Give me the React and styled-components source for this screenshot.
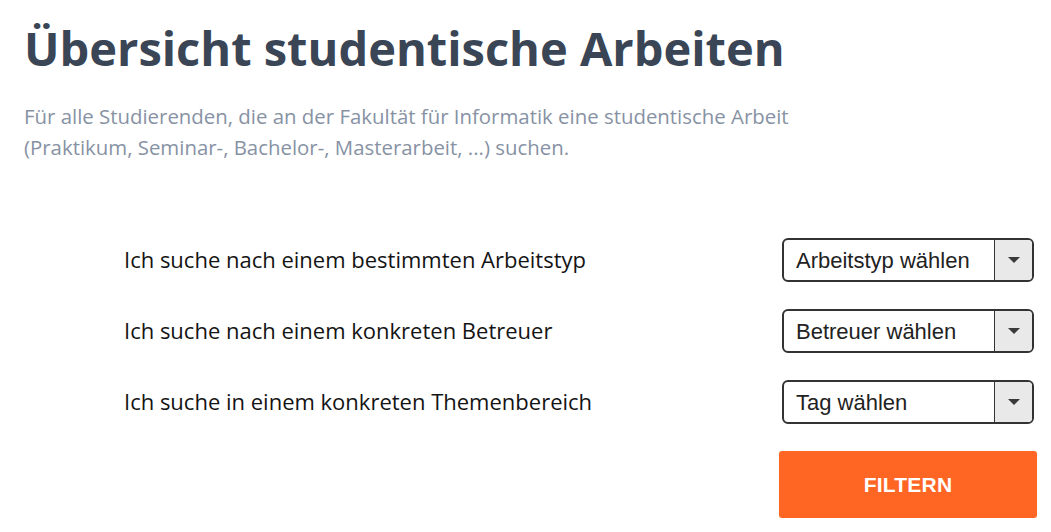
import { Fragment } from "react";
import styled, { createGlobalStyle } from "styled-components";

const GlobalStyle = createGlobalStyle`
  body {
    margin: 0;
    background: #fff;
    font-family: "Open Sans", "Liberation Sans", sans-serif;
  }
`;

const Page = styled.div`
  padding: 0 14px 0 24px;
`;

const Title = styled.h1`
  margin: 21px 0 0;
  font-size: 47px;
  line-height: 55px;
  font-weight: 700;
  color: #3a4555;
`;

const Intro = styled.p`
  margin: 25px 0 0;
  max-width: 800px;
  font-size: 20.4px;
  line-height: 31px;
  color: #8792a4;
`;

const Form = styled.div`
  margin: 75px 0 0 100px;
  display: grid;
  grid-template-columns: 1fr 258px;
  row-gap: 27px;
  align-items: center;
`;

const Label = styled.label`
  font-size: 22px;
  line-height: 30px;
  color: #141414;
  padding-bottom: 2px;
`;

const SelectBox = styled.div`
  justify-self: center;
  width: 252px;
  height: 44px;
  box-sizing: border-box;
  display: flex;
  border: 2px solid #333;
  border-radius: 6px;
  overflow: hidden;
  background: #fff;
`;

const Select = styled.select`
  flex: 1;
  min-width: 0;
  appearance: none;
  border: none;
  outline: none;
  background: transparent;
  padding: 0 0 0 12px;
  font-family: "Liberation Sans", Arial, sans-serif;
  font-size: 22px;
  color: #222;
`;

const ArrowBox = styled.div`
  width: 37px;
  display: flex;
  align-items: center;
  justify-content: center;
  background: #e9e9e9;
  border-left: 1.5px solid #333;
`;

const Arrow = styled.span`
  width: 0;
  height: 0;
  border-left: 6px solid transparent;
  border-right: 6px solid transparent;
  border-top: 6px solid #3a3a3a;
`;

const Spacer = styled.div``;

const FilterButton = styled.button`
  height: 67px;
  border: none;
  border-radius: 3px;
  background: #ff6624;
  color: #fff;
  font-family: "Liberation Sans", Arial, sans-serif;
  font-weight: 700;
  font-size: 21px;
  letter-spacing: 0.2px;
  cursor: pointer;
`;

const rows = [
  { label: "Ich suche nach einem bestimmten Arbeitstyp", placeholder: "Arbeitstyp wählen" },
  { label: "Ich suche nach einem konkreten Betreuer", placeholder: "Betreuer wählen" },
  { label: "Ich suche in einem konkreten Themenbereich", placeholder: "Tag wählen" },
];

const App = () => {
  return (
    <Page>
      <GlobalStyle />
      <Title>Übersicht studentische Arbeiten</Title>
      <Intro>
        Für alle Studierenden, die an der Fakultät für Informatik eine studentische
        Arbeit <br />(Praktikum, Seminar-, Bachelor-, Masterarbeit, ...) suchen.
      </Intro>
      <Form>
        {rows.map((row) => (
          <Fragment key={row.label}>
            <Label>{row.label}</Label>
            <SelectBox>
              <Select defaultValue="">
                <option value="">{row.placeholder}</option>
              </Select>
              <ArrowBox>
                <Arrow />
              </ArrowBox>
            </SelectBox>
          </Fragment>
        ))}
        <Spacer />
        <FilterButton>FILTERN</FilterButton>
      </Form>
    </Page>
  );
};

export default App;
